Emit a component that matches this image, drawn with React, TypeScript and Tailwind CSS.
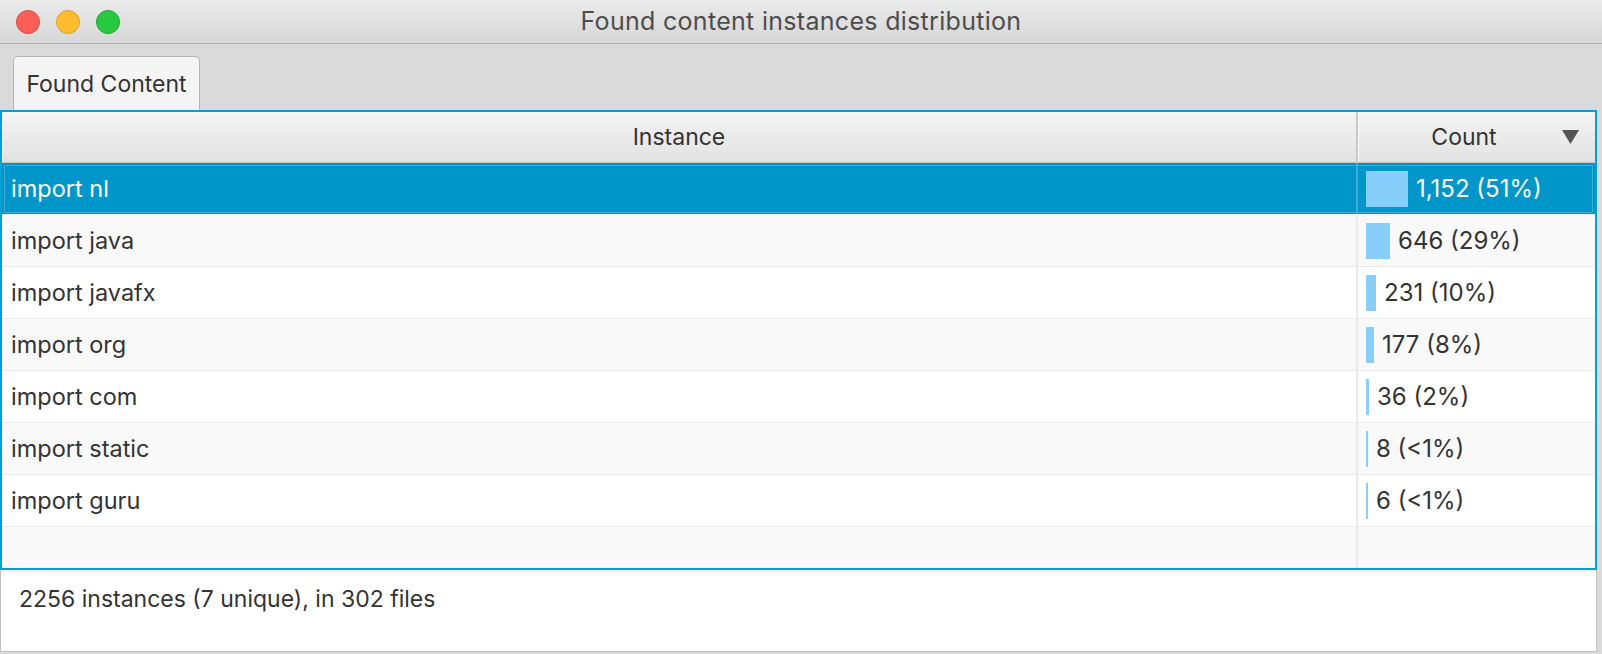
import React from 'react';

type Row = { name: string; count: string; bar: number };

const rows: Row[] = [
  { name: 'import nl', count: '1,152 (51%)', bar: 42 },
  { name: 'import java', count: '646 (29%)', bar: 24 },
  { name: 'import javafx', count: '231 (10%)', bar: 10 },
  { name: 'import org', count: '177 (8%)', bar: 8 },
  { name: 'import com', count: '36 (2%)', bar: 3 },
  { name: 'import static', count: '8 (<1%)', bar: 2 },
  { name: 'import guru', count: '6 (<1%)', bar: 2 },
];

function TrafficLights() {
  return (
    <div className="flex items-center gap-[16px] pl-[16px]">
      <span className="h-[24px] w-[24px] rounded-full border border-[#e0443e] bg-[#fe5f57]" />
      <span className="h-[24px] w-[24px] rounded-full border border-[#dea123] bg-[#febc2e]" />
      <span className="h-[24px] w-[24px] rounded-full border border-[#1aab29] bg-[#28c840]" />
    </div>
  );
}

export default function App() {
  return (
    <div className="flex h-[654px] w-[1602px] flex-col overflow-hidden bg-[#dadada] font-['Inter','Liberation_Sans',sans-serif] text-[#333333]">
      {/* Title bar */}
      <div className="grid h-[44px] shrink-0 grid-cols-[1fr_auto_1fr] items-center border-b border-[#b1b1b1] bg-gradient-to-b from-[#ebebeb] to-[#d6d6d6]">
        <TrafficLights />
        <div className="text-[25px] tracking-[0.3px] text-[#4d4d4d]">Found content instances distribution</div>
        <div />
      </div>

      {/* Tab strip */}
      <div className="flex h-[66px] shrink-0 items-end pl-[13px]">
        <div className="flex h-[54px] w-[187px] items-center justify-center rounded-t-[5px] border border-b-0 border-[#b4b4b4] bg-[#f4f4f4] pt-[2px] text-[23px]">
          Found Content
        </div>
      </div>

      {/* Table */}
      <div className="flex h-[460px] w-[1597px] shrink-0 flex-col border-2 border-[#039ed3] bg-[#f9f9f9]">
        <div className="flex h-[51px] shrink-0 border-b border-[#c5c5c5] bg-gradient-to-b from-[#f4f4f4] to-[#e2e2e2]">
          <div className="flex w-[1356px] items-center justify-center border-r-2 border-[#c8c8c8] shadow-[inset_1px_1px_0_#fafafa] text-[23px]">
            Instance
          </div>
          <div className="flex flex-1 items-center shadow-[inset_1px_1px_0_#fafafa]">
            <div className="flex-1 pl-[8px] text-center text-[23px]">Count</div>
            <svg width="17" height="14" viewBox="0 0 17 14" className="mr-[16px]">
              <path d="M0 0 L17 0 L8.5 14 Z" fill="#555555" />
            </svg>
          </div>
        </div>

        {rows.map((r, i) => {
          const selected = i === 0;
          const bg = selected ? 'bg-[#0096c9] text-white outline outline-1 -outline-offset-[3px] outline-[#3dabd7]' : i % 2 === 1 ? 'bg-[#f9f9f9]' : 'bg-white';
          return (
            <div key={r.name} className={`flex h-[52px] shrink-0 border-b border-[#ececec] ${bg}`}>
              <div className={`flex w-[1356px] items-center border-r-2 pl-[9px] text-[23.5px] ${selected ? 'border-[#3dabd7]' : 'border-[#ececec]'}`}>
                {r.name}
              </div>
              <div className="flex flex-1 items-center gap-[8px] pl-[8px] text-[24px]">
                <span className="h-[36px] bg-[#87cefa]" style={{ width: r.bar }} />
                <span>{r.count}</span>
              </div>
            </div>
          );
        })}

        <div className="flex flex-1 bg-[#f9f9f9]">
          <div className="w-[1356px] border-r-2 border-[#ececec]" />
          <div className="flex-1" />
        </div>
      </div>

      {/* Summary pane */}
      <div className="h-[82px] w-[1597px] shrink-0 border-x border-b border-[#c2c2c2] bg-white pl-[18px] pt-[12px] shadow-[inset_0_4px_4px_-3px_rgba(0,0,0,0.12)] text-[23px]">
        2256 instances (7 unique), in 302 files
      </div>
    </div>
  );
}
